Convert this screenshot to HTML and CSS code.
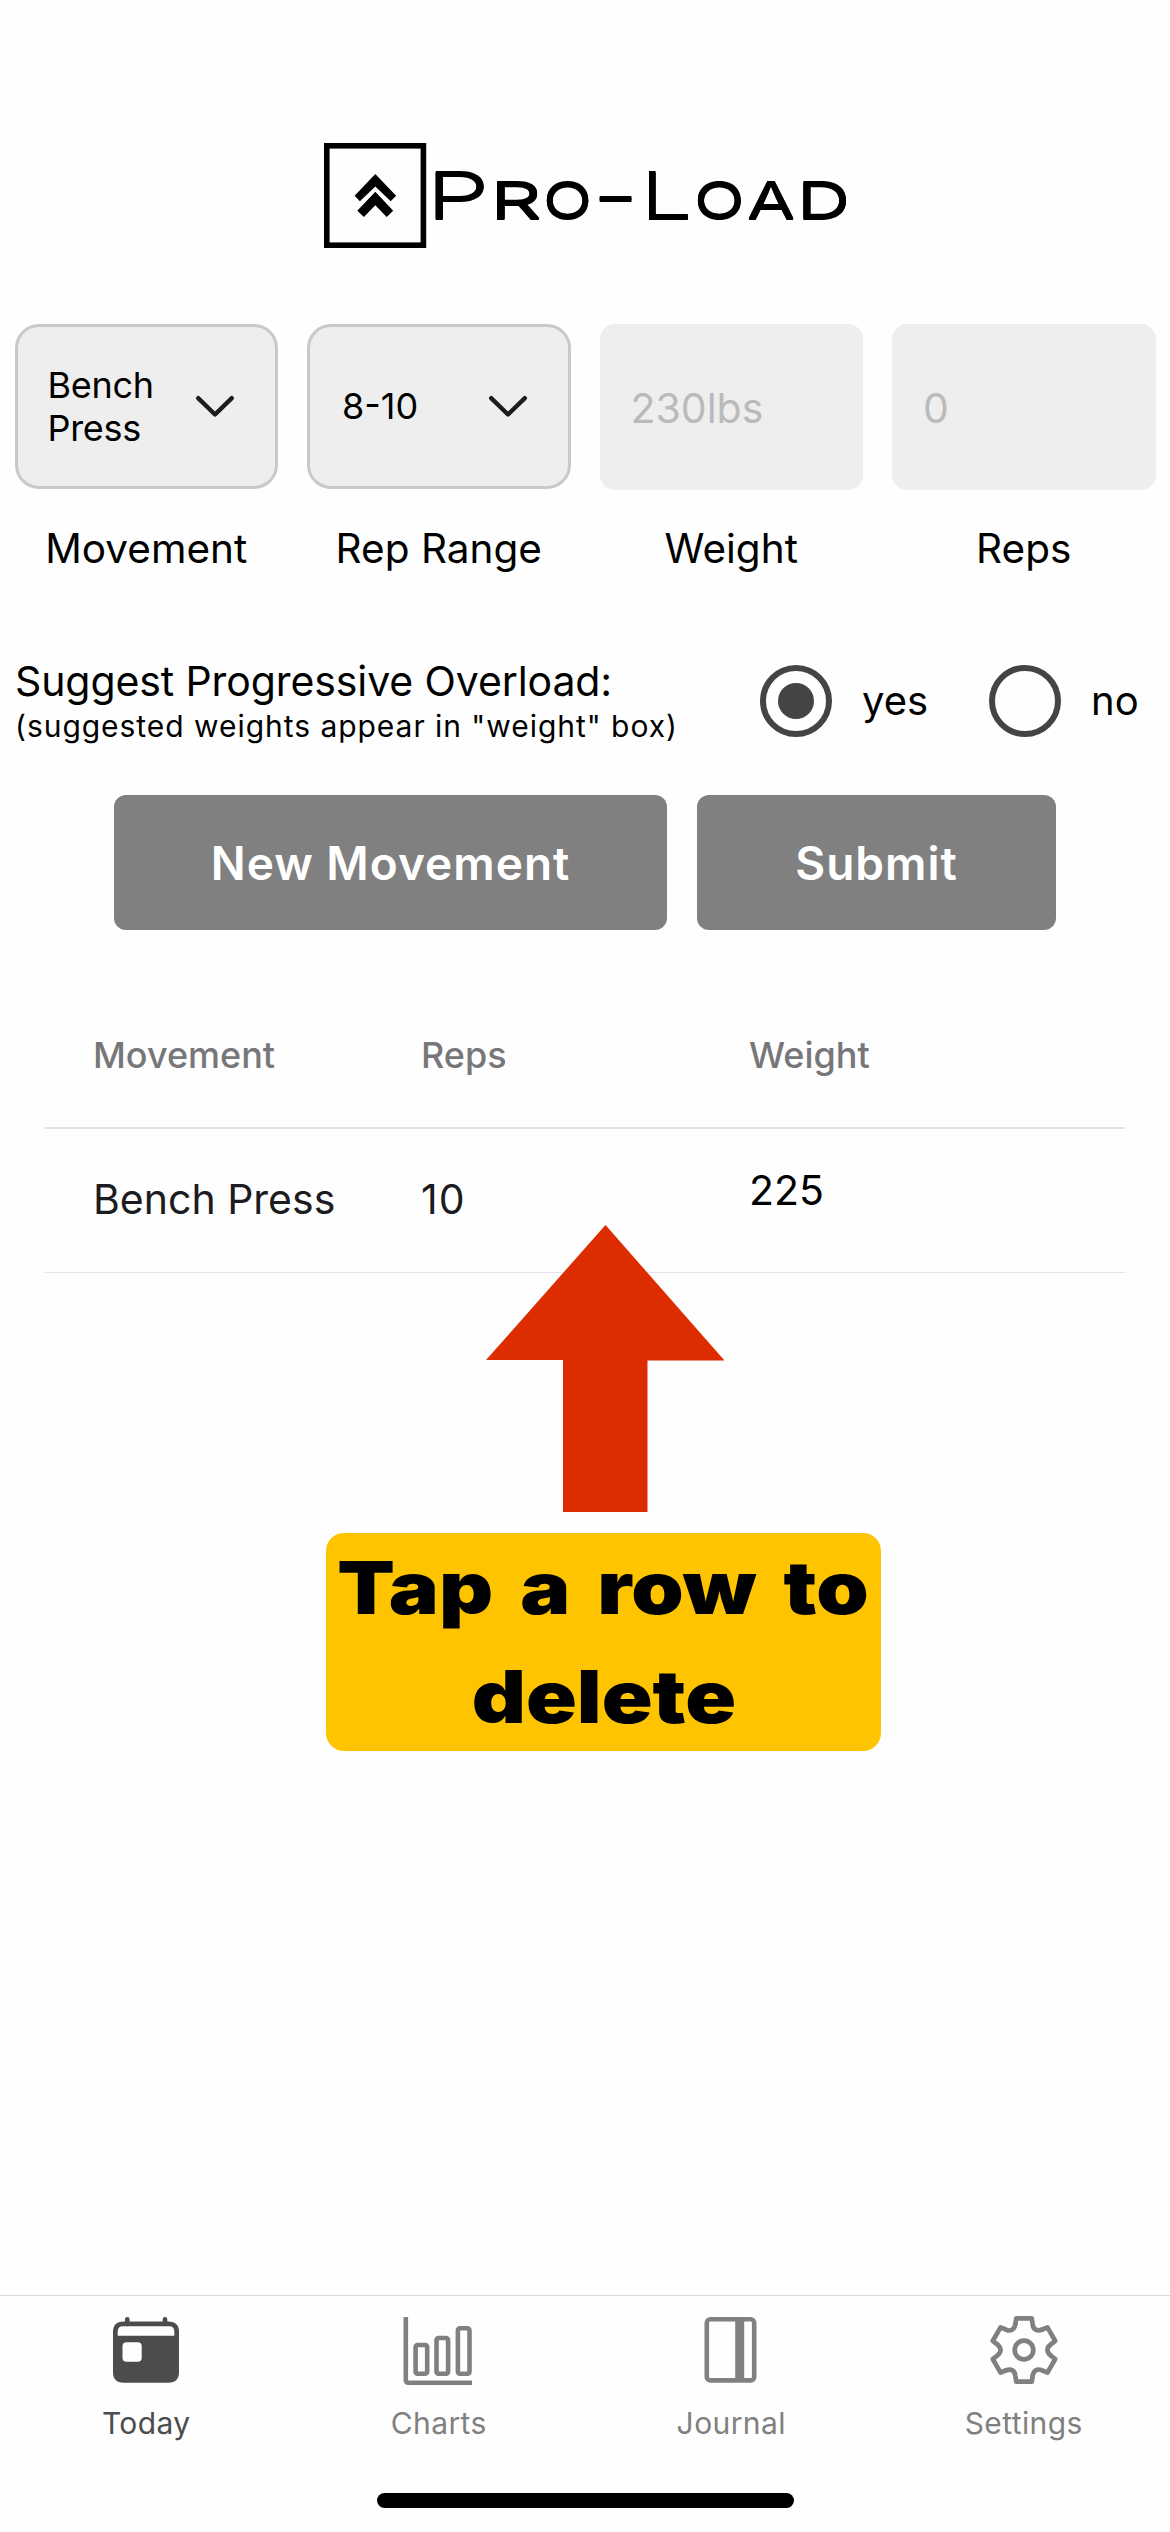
FILE: index.html
```html
<!DOCTYPE html>
<html lang="en">
<head>
<meta charset="utf-8">
<title>Pro-Load</title>
<link rel="stylesheet" href="styles.css">
</head>
<body>
<main class="screen">
  <header class="brand">
    <svg class="brand-mark" viewBox="0 0 102 105">
      <rect x="2.8" y="2.8" width="96.6" height="99.4" fill="none" stroke="#000" stroke-width="5.6"/>
      <path d="M51.3 31L72.1 52.7L66.7 58.3L51.3 43.5L35.9 58.3L30.6 52.7Z"/>
      <path d="M51.3 48.7L69.2 67.7L62.7 74L51.3 62.3L39.9 74L33.3 67.7Z"/>
    </svg>
    <div class="wordmark"><span class="w-p">P</span><span class="w-r">R</span><span class="w-o">O</span><span class="w-dash">-</span><span class="w-l">L</span><span class="w-o2">O</span><span class="w-a">A</span><span class="w-d">D</span></div>
  </header>

  <section class="fields">
    <div class="field">
      <div class="box select tight"><span>Bench<br>Press</span>
        <svg class="chevron" viewBox="0 0 38 21"><path d="M2.2 2.2L19 18.5L35.8 2.2"/></svg></div>
      <label>Movement</label>
    </div>
    <div class="field">
      <div class="box select"><span>8-10</span>
        <svg class="chevron" viewBox="0 0 38 21"><path d="M2.2 2.2L19 18.5L35.8 2.2"/></svg></div>
      <label>Rep Range</label>
    </div>
    <div class="field">
      <div class="box input">230lbs</div>
      <label>Weight</label>
    </div>
    <div class="field">
      <div class="box input">0</div>
      <label>Reps</label>
    </div>
  </section>

  <section class="overload">
    <div class="overload-text">
      <div class="overload-title">Suggest Progressive Overload:</div>
      <div class="overload-note">(suggested weights appear in "weight" box)</div>
    </div>
    <div class="option"><span class="radio on"></span><span class="option-name">yes</span></div>
    <div class="option"><span class="radio"></span><span class="option-name">no</span></div>
  </section>

  <section class="actions">
    <div class="btn wide">New Movement</div>
    <div class="btn">Submit</div>
  </section>

  <section class="table">
    <div class="row head"><span>Movement</span><span>Reps</span><span>Weight</span></div>
    <div class="row data"><span>Bench Press</span><span class="reps">10</span><span class="raised">225</span></div>
  </section>

  <aside class="callout">
    <svg class="arrow" viewBox="0 0 239 287"><path d="M119.5 0L238.5 135.5H161.5V287H77V135H0Z"/></svg>
    <div class="tip"><span class="tip-first">Tap a row to</span><span class="tip-second">delete</span></div>
  </aside>

  <nav class="tabs">
    <div class="tab active">
      <svg class="icon" viewBox="0 0 72 72">
        <path fill="currentColor" fill-rule="evenodd" d="M13.5 6.5H58.5Q69 6.5 69 17V57Q69 67.7 58.5 67.7H13.5Q3 67.7 3 57V17Q3 6.5 13.5 6.5ZM13 11.3Q7.7 11.3 7.7 16.5V20.7H64.3V16.5Q64.3 11.3 59 11.3ZM16.5 27.3Q12.5 27.3 12.5 31.3V42.7Q12.5 46.7 16.5 46.7H27.7Q31.7 46.7 31.7 42.7V31.3Q31.7 27.3 27.7 27.3Z"/>
        <path stroke="currentColor" stroke-width="4.6" stroke-linecap="round" d="M17.3 4.3V9M55 4.3V9"/>
      </svg>
      <span>Today</span>
    </div>
    <div class="tab">
      <svg class="icon" viewBox="0 0 72 72" fill="none" stroke="currentColor" stroke-width="4.6">
        <path d="M2.8 2V65Q2.8 67.7 5.5 67.7H69"/>
        <rect x="12.6" y="30" width="11.6" height="28.7" rx="2"/>
        <rect x="33.5" y="23" width="11.6" height="35.7" rx="2"/>
        <rect x="54.9" y="13.3" width="11.6" height="45.4" rx="2"/>
      </svg>
      <span>Charts</span>
    </div>
    <div class="tab">
      <svg class="icon" viewBox="0 0 72 72" fill="none" stroke="currentColor" stroke-width="4.6">
        <rect x="11.8" y="4.3" width="47.4" height="61.1" rx="3.5"/>
        <path stroke-width="9" d="M44.7 4V66"/>
      </svg>
      <span>Journal</span>
    </div>
    <div class="tab">
      <svg class="icon" viewBox="-36 -35 72 72" fill="none" stroke="currentColor" stroke-width="4.7" stroke-linecap="round" stroke-linejoin="round">
        <defs><path id="tooth" d="M-8.6 -26L-7.8 -31.6H7.8L8.6 -26C9 -20.5 13 -18.4 18.2 -20.45"/></defs>
        <use href="#tooth"/><use href="#tooth" transform="rotate(60)"/><use href="#tooth" transform="rotate(120)"/>
        <use href="#tooth" transform="rotate(180)"/><use href="#tooth" transform="rotate(240)"/><use href="#tooth" transform="rotate(300)"/>
        <circle r="9.3"/>
      </svg>
      <span>Settings</span>
    </div>
  </nav>
  <div class="home"></div>
</main>
</body>
</html>
```

FILE: styles.css
```css
* { box-sizing: border-box; }
body { margin: 0; background: #fefefe; font-family: Inter, "Liberation Sans", sans-serif; color: #000; }
svg { display: block; overflow: visible; }
.screen { position: relative; width: 1170px; height: 2532px; display: flex; flex-direction: column; overflow: hidden; }

.brand { height: 324px; padding: 143px 0 0 324px; display: flex; align-items: flex-start; flex: none; }
.brand-mark { width: 102px; height: 105px; flex: none; }

/* Wide display lettering: each glyph is stretched to its own width */
.wordmark { display: flex; align-items: baseline; font-size: 65px; line-height: 105px; font-weight: 300; text-shadow: 0 -1.2px 0 #000, 0 1.2px 0 #000; }
.wordmark span { transform-origin: left; flex: none; }
.w-p { width: 64px; transform: scaleX(1.56); }
.w-r { width: 52.5px; font-size: 51px; font-weight: 400; transform: scaleX(1.58); }
.w-o { width: 49.5px; font-size: 51px; font-weight: 400; transform: scaleX(1.26); }
.w-dash { width: 47.5px; transform: scaleX(1.6); }
.w-l { width: 54px; transform: scaleX(1.44); }
.w-o2 { width: 53.5px; font-size: 51px; font-weight: 400; transform: scaleX(1.3); }
.w-a { width: 50px; font-size: 51px; font-weight: 400; transform: scaleX(1.37); }
.w-d { width: 60px; font-size: 51px; font-weight: 400; transform: scaleX(1.45); }

.fields { display: grid; grid-template-columns: repeat(4, 292.5px); height: 332px; flex: none; }
.field { display: flex; flex-direction: column; padding: 0 14.5px; }
.box { height: 166px; background: #eee; display: flex; align-items: center; }
.select { height: 165px; border: 3px solid #c9c9c9; border-radius: 24px; justify-content: space-between; padding: 0 41px 0 32px; font-size: 36px; line-height: 43px; }
.tight { padding-left: 30px; letter-spacing: -0.3px; }
.chevron { width: 38px; height: 21px; fill: none; stroke: #1c1c1e; stroke-width: 4.4px; stroke-linecap: round; stroke-linejoin: round; }
.input { border-radius: 15px; padding-left: 31px; padding-top: 1px; font-size: 41px; color: #bababd; }
label { margin-top: auto; margin-bottom: 83px; text-align: center; font-size: 40.5px; line-height: 48px; }

.overload { display: flex; height: 90px; padding-left: 15px; align-items: center; font-size: 40px; flex: none; }
.overload-text { width: 745px; flex: none; }
.overload-title { font-size: 41px; line-height: 51px; letter-spacing: -0.1px; }
.overload-note { font-size: 30px; line-height: 39px; letter-spacing: 0.96px; white-space: nowrap; }
.option { display: flex; align-items: center; gap: 30px; width: 229px; flex: none; }
.option-name { padding-bottom: 2px; }
.radio { width: 72px; height: 72px; border: 6px solid #444; border-radius: 50%; display: grid; place-items: center; }
.radio.on::after { content: ""; width: 36px; height: 36px; border-radius: 50%; background: #444; }

.actions { display: flex; gap: 30px; padding: 49px 0 0 114px; flex: none; }
.btn { width: 359px; height: 135px; border-radius: 12px; background: #808080; color: #fff; font-size: 46px; font-weight: 600; letter-spacing: 1px; display: grid; place-items: center; }
.btn.wide { width: 553px; }

.table { margin: 50px 45px 0; flex: none; }
.row { display: grid; grid-template-columns: repeat(3, 328px); padding-left: 48px; align-items: center; }
.head { height: 149px; border-bottom: 2px solid #e2e0ec; font-size: 36px; font-weight: 500; color: #77777a; padding-top: 2px; }
.data { height: 144px; border-bottom: 1px solid #e4e2ee; font-size: 41px; color: #1c1b1f; padding-bottom: 3px; }
.reps { letter-spacing: 1px; }
.raised { color: #000; padding-bottom: 18px; }

/* Hint laid over the table */
.callout { position: absolute; left: 326px; top: 1225px; width: 555px; display: flex; flex-direction: column; }
.arrow { width: 239px; height: 287px; margin-left: 159.5px; fill: #dd2c00; }
.tip { margin-top: 21px; height: 218px; border-radius: 18px; background: #ffc400; font-size: 73px; font-weight: 900; line-height: 109px; display: flex; flex-direction: column; align-items: center; white-space: nowrap; }
.tip span { transform: scaleX(1.15); }
.tip-first { word-spacing: 9px; }

.tabs { margin-top: auto; height: 198px; flex: none; border-top: 1px solid #d8d8d8; display: grid; grid-template-columns: repeat(4, 1fr); color: #808080; }
.tab { display: flex; flex-direction: column; align-items: center; padding-top: 19px; font-size: 30px; line-height: 36px; gap: 18px; letter-spacing: 0.4px; }
.active { color: #4b4c4e; }
.icon { width: 72px; height: 72px; }
.home { width: 417px; height: 15px; border-radius: 8px; background: #000; margin: 0 auto 24px; flex: none; }
```
